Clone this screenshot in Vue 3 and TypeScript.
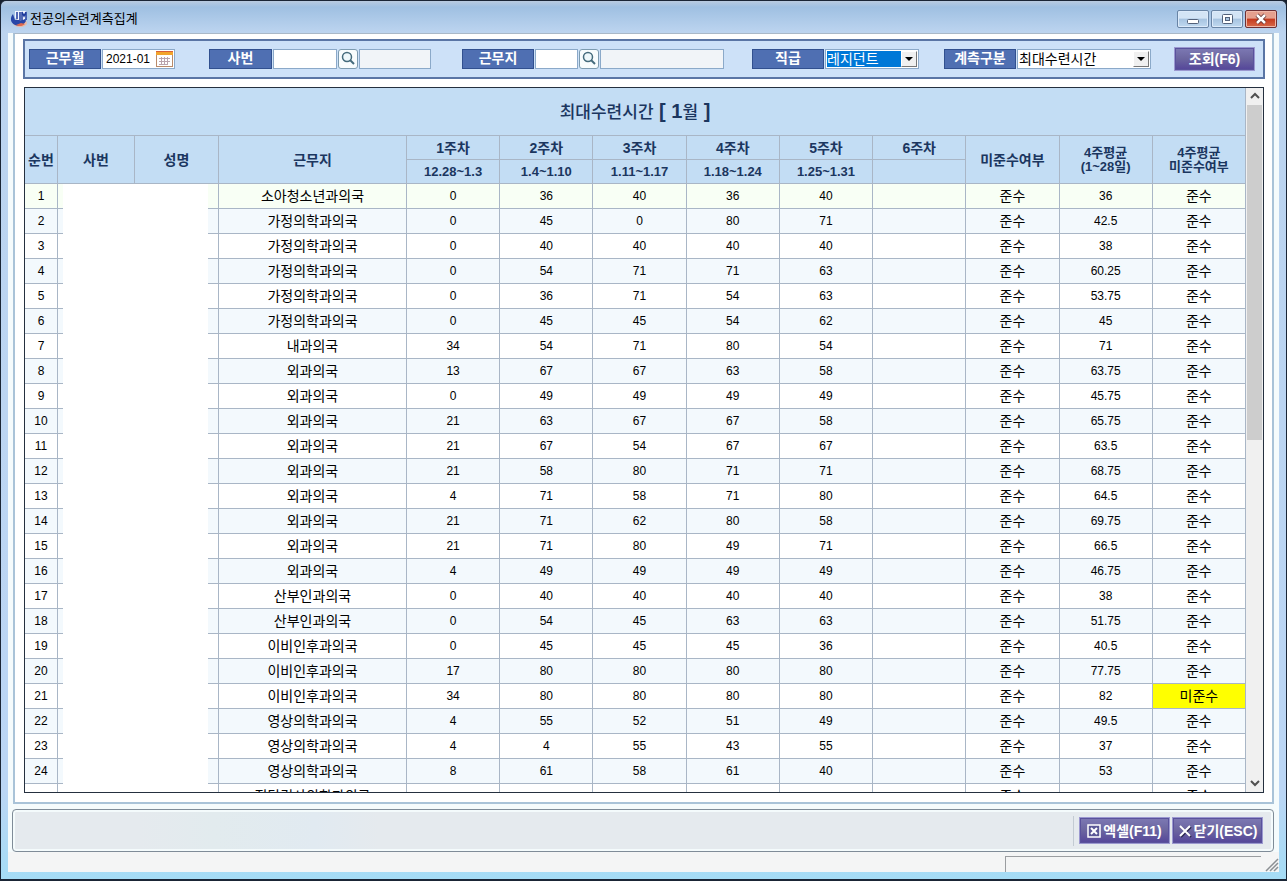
<script setup lang="ts">
import { computed, ref } from 'vue'

type Row = [string, number[], number, string?]

const month = ref('2021-01')
const employeeId = ref('')
const employeeName = ref('')
const deptCode = ref('')
const deptName = ref('')
const position = ref('레지던트')
const measure = ref('최대수련시간')

const weeks = [
  { label: '1주차', range: '12.28~1.3' },
  { label: '2주차', range: '1.4~1.10' },
  { label: '3주차', range: '1.11~1.17' },
  { label: '4주차', range: '1.18~1.24' },
  { label: '5주차', range: '1.25~1.31' },
  { label: '6주차', range: '' },
]

const source: Row[] = [
  ['소아청소년과의국', [0, 36, 40, 36, 40], 36],
  ['가정의학과의국', [0, 45, 0, 80, 71], 42.5],
  ['가정의학과의국', [0, 40, 40, 40, 40], 38],
  ['가정의학과의국', [0, 54, 71, 71, 63], 60.25],
  ['가정의학과의국', [0, 36, 71, 54, 63], 53.75],
  ['가정의학과의국', [0, 45, 45, 54, 62], 45],
  ['내과의국', [34, 54, 71, 80, 54], 71],
  ['외과의국', [13, 67, 67, 63, 58], 63.75],
  ['외과의국', [0, 49, 49, 49, 49], 45.75],
  ['외과의국', [21, 63, 67, 67, 58], 65.75],
  ['외과의국', [21, 67, 54, 67, 67], 63.5],
  ['외과의국', [21, 58, 80, 71, 71], 68.75],
  ['외과의국', [4, 71, 58, 71, 80], 64.5],
  ['외과의국', [21, 71, 62, 80, 58], 69.75],
  ['외과의국', [21, 71, 80, 49, 71], 66.5],
  ['외과의국', [4, 49, 49, 49, 49], 46.75],
  ['산부인과의국', [0, 40, 40, 40, 40], 38],
  ['산부인과의국', [0, 54, 45, 63, 63], 51.75],
  ['이비인후과의국', [0, 45, 45, 45, 36], 40.5],
  ['이비인후과의국', [17, 80, 80, 80, 80], 77.75],
  ['이비인후과의국', [34, 80, 80, 80, 80], 82, '미준수'],
  ['영상의학과의국', [4, 55, 52, 51, 49], 49.5],
  ['영상의학과의국', [4, 4, 55, 43, 55], 37],
  ['영상의학과의국', [8, 61, 58, 61, 40], 53],
  ['진단검사의학과의국', [], NaN],
]

const rows = computed(() =>
  source.map(([dept, hours, average, averageStatus], i) => ({
    no: hours.length ? String(i + 1) : '',
    dept,
    hours: weeks.map((_, w) => hours[w] ?? ''),
    average: Number.isNaN(average) ? '' : average,
    status: '준수',
    averageStatus: averageStatus ?? '준수',
  })),
)
</script>

<template>
  <div class="window">
    <header class="titlebar">
      <svg class="logo" viewBox="0 0 18 18" aria-hidden="true">
        <ellipse cx="10" cy="13" rx="7" ry="4" fill="#e9b9a4" />
        <path d="M3 4C0 7 0 13 5 15c4 2 9 0 11-4l-1-2-10 1z" fill="#2846a8" />
        <path d="M6 15c3 2 7 1 9-1l-4-1z" fill="#dd6a50" />
        <path d="M5 1h11v7c-3 3-8 3-11 0z" fill="#f4f7ff" />
        <path d="M7 2v7M10 2v8M12 10V2l2 4 2-4v8" fill="none" stroke="#1e3b9d" stroke-width="1.500" />
      </svg>
      <h1>전공의수련계측집계</h1>
      <div class="controls">
        <button type="button" aria-label="최소화">
          <svg viewBox="0 0 30 16"><rect x="9.500" y="8.500" width="11" height="4" rx="1" fill="#fff" stroke="#52617a" /></svg>
        </button>
        <button type="button" aria-label="최대화">
          <svg viewBox="0 0 30 16"><rect x="10.500" y="3.500" width="10" height="9" rx="1" fill="#fff" stroke="#52617a" /><rect x="13.500" y="6.500" width="4" height="3" fill="#a9c3de" stroke="#52617a" /></svg>
        </button>
        <button type="button" class="shut" aria-label="닫기">
          <svg viewBox="0 0 30 16"><path d="M11 4l8 8M19 4l-8 8" stroke="#5a2a2a" stroke-width="4" /><path d="M11 4l8 8M19 4l-8 8" stroke="#fff" stroke-width="2.500" /></svg>
        </button>
      </div>
    </header>

    <div class="client">
      <main class="panel">
        <form class="filters" @submit.prevent>
          <div class="group">
            <label for="month">근무월</label>
            <div class="date">
              <input id="month" v-model="month" type="text" />
              <button type="button" aria-label="달력">
                <svg viewBox="0 0 18 18">
                  <rect x="0.500" y="1.500" width="16" height="15" fill="#fff" stroke="#b98a6a" />
                  <rect x="0" y="1" width="17" height="4" fill="#f2a52c" />
                  <path d="M0 1.500h17" stroke="#d9603a" />
                  <path d="M3 8.500h11M3 11.500h11M3 14.500h8M5.500 7v8M8.500 7v8M11.500 7v8" stroke="#b9a3ad" />
                </svg>
              </button>
            </div>
          </div>
          <div class="group">
            <label for="emp" class="short">사번</label>
            <input id="emp" v-model="employeeId" class="w64" type="text" />
            <button type="button" class="search" aria-label="사번 검색">
              <svg viewBox="0 0 18 18"><circle cx="8" cy="7" r="4.500" fill="#eef8fb" stroke="#456b7c" stroke-width="1.500" /><path d="M11 10l4 4" stroke="#456b7c" stroke-width="2" /></svg>
            </button>
            <input v-model="employeeName" class="w72 locked" type="text" readonly aria-label="성명" />
          </div>
          <div class="group">
            <label for="dept">근무지</label>
            <input id="dept" v-model="deptCode" class="w43" type="text" />
            <button type="button" class="search" aria-label="근무지 검색">
              <svg viewBox="0 0 18 18"><circle cx="8" cy="7" r="4.500" fill="#eef8fb" stroke="#456b7c" stroke-width="1.500" /><path d="M11 10l4 4" stroke="#456b7c" stroke-width="2" /></svg>
            </button>
            <input v-model="deptName" class="w124 locked" type="text" readonly aria-label="근무지명" />
          </div>
          <div class="group">
            <label for="position">직급</label>
            <div class="combo active">
              <select id="position" v-model="position"><option>레지던트</option></select>
              <span class="arrow"></span>
            </div>
          </div>
          <div class="group">
            <label for="measure">계측구분</label>
            <div class="combo wide">
              <select id="measure" v-model="measure"><option>최대수련시간</option></select>
              <span class="arrow"></span>
            </div>
          </div>
          <button type="submit" class="action query">조회(F6)</button>
        </form>

        <section class="grid">
          <div class="viewport">
            <table>
              <colgroup>
                <col class="c-no" /><col class="c-id" /><col class="c-name" /><col class="c-dept" />
                <col v-for="n in 9" :key="n" />
              </colgroup>
              <thead>
                <tr class="caption"><th colspan="13"><span>최대수련시간</span> [ 1<span>월</span> ]</th></tr>
                <tr class="sub">
                  <th rowspan="2">순번</th>
                  <th rowspan="2">사번</th>
                  <th rowspan="2">성명</th>
                  <th rowspan="2">근무지</th>
                  <th v-for="w in weeks" :key="w.label">{{ w.label }}</th>
                  <th rowspan="2">미준수여부</th>
                  <th rowspan="2" class="two">4주평균<br />(1~28일)</th>
                  <th rowspan="2" class="two">4주평균<br />미준수여부</th>
                </tr>
                <tr class="sub">
                  <th v-for="w in weeks" :key="w.label" class="range">{{ w.range }}</th>
                </tr>
              </thead>
              <tbody>
                <tr v-for="(r, i) in rows" :key="i">
                  <td>{{ r.no }}</td>
                  <td></td>
                  <td></td>
                  <td class="ko">{{ r.dept }}</td>
                  <td v-for="(h, w) in r.hours" :key="w">{{ h }}</td>
                  <td class="ko">{{ r.status }}</td>
                  <td>{{ r.average }}</td>
                  <td class="ko" :class="{ alert: r.averageStatus === '미준수' }">{{ r.averageStatus }}</td>
                </tr>
              </tbody>
            </table>
            <div class="mask"></div>
          </div>
          <div class="scrollbar" aria-hidden="true">
            <svg viewBox="0 0 17 17"><path d="M5 10l4-4 4 4" /></svg>
            <div class="track"><div class="thumb"></div></div>
            <svg viewBox="0 0 17 17"><path d="M5 6l4 4 4-4" /></svg>
          </div>
        </section>
      </main>

      <footer class="toolbar">
        <button type="button" class="action">
          <svg viewBox="0 0 14 14"><rect x="1" y="1" width="12" height="12" fill="#5a5796" stroke="#fff" stroke-width="1.500" /><path d="M4 4l6 6M10 4l-6 6" stroke="#fff" stroke-width="2" /></svg>
          <span>엑셀(F11)</span>
        </button>
        <button type="button" class="action">
          <svg viewBox="0 0 14 14"><path d="M3 3l10 10M13 3l-10 10" stroke="#2b2850" stroke-width="2" /><path d="M2 2l10 10M12 2L2 12" stroke="#fff" stroke-width="2" /></svg>
          <span>닫기(ESC)</span>
        </button>
      </footer>

      <div class="status">
        <div class="message"></div>
        <svg viewBox="0 0 14 14" aria-hidden="true"><path d="M1 13L13 1M5 13l8-8M9 13l4-4" stroke="#8b9094" stroke-width="1.500" /></svg>
      </div>
    </div>
  </div>
</template>

<style>
body {
  margin: 0;
  background: #16202e;
}
</style>

<style scoped>
* {
  box-sizing: border-box;
}
.window {
  display: flex;
  flex-direction: column;
  height: 100vh;
  padding: 0 7px 7px;
  border: 1px solid #1a2535;
  border-bottom-width: 2px;
  border-radius: 6px 6px 0 0;
  background: linear-gradient(#b9cbe0 0, #9fc0e2 6px, #bcd4ef 31px, #bbd6f5 90%, #a5dcf5 100%);
  font-family: 'Liberation Sans', 'Noto Sans CJK KR', sans-serif;
  font-size: 12px;
  color: #000;
}
button,
input,
select {
  margin: 0;
  padding: 0;
  border: 0;
  border-radius: 0;
  font: inherit;
  color: inherit;
}
svg {
  display: block;
  fill: none;
}
.titlebar {
  display: flex;
  flex: none;
  align-items: center;
  height: 32px;
  padding: 3px 2px 0;
}
.logo {
  width: 18px;
  height: 18px;
}
h1 {
  flex: 1;
  margin: 0 0 0 2px;
  font-size: 13px;
  line-height: 18px;
  font-weight: 400;
}
.controls {
  display: flex;
  gap: 2px;
}
.controls button {
  width: 32px;
  height: 18px;
  border: 1px solid #6884a5;
  border-radius: 2px;
  background: linear-gradient(#d3e4f5 0 45%, #a6c3e0 50%, #c0d9f0);
  box-shadow: inset 0 0 0 1px #dceafa;
}
.controls .shut {
  border-color: #6d2f34;
  background: linear-gradient(#e5a08e 0 45%, #c43a1e 50%, #d8694a);
  box-shadow: inset 0 0 0 1px #eeb7a8;
}
.client {
  display: flex;
  flex: 1;
  flex-direction: column;
  min-height: 0;
  padding: 0 5px;
  background: #f5fbfc;
}
.panel {
  display: flex;
  flex: 1;
  flex-direction: column;
  gap: 8px;
  min-height: 0;
  padding: 5px 7px 9px 8px;
  border: 2px solid #a9c3d8;
  border-top: 1px solid #a9b8c8;
  background: #fff;
}
.filters {
  display: grid;
  grid-template-columns: 180fr 253fr 290fr 192fr 230fr 81px;
  flex: none;
  align-items: center;
  height: 40px;
  padding: 0 8px 0 4px;
  border: 2px solid #5a75a5;
  background: #cde1f8;
}
.group {
  display: flex;
  gap: 1px;
}
label {
  width: 72px;
  height: 20px;
  border: 1px solid #31508f;
  background: #4f6fb2;
  color: #fff;
  font-size: 14px;
  font-weight: 700;
  line-height: 16px;
  text-align: center;
}
label.short {
  width: 63px;
}
.group input {
  height: 20px;
  padding: 0 3px;
  border: 1px solid #8ba9c9;
  background: #fff;
}
.group .locked {
  background: #f1f4f8;
}
.w43 {
  width: 43px;
}
.w64 {
  width: 64px;
}
.w72 {
  width: 72px;
}
.w124 {
  width: 124px;
}
.date {
  display: flex;
  align-items: center;
  width: 73px;
  height: 20px;
  border: 1px solid #8ba9c9;
  background: #fff;
}
.group .date input {
  flex: 1;
  min-width: 0;
  height: 18px;
  border: 0;
}
.date button {
  width: 18px;
  height: 18px;
  background: none;
}
.search {
  width: 20px;
  height: 20px;
  border: 1px solid #7d9bb0;
  border-radius: 3px;
  background: #f8fcfd;
}
.combo {
  display: flex;
  width: 94px;
  height: 20px;
  padding: 1px;
  border: 1px solid #8ba9c9;
  background: #fff;
}
.combo.wide {
  width: 134px;
}
.combo select {
  flex: 1;
  min-width: 0;
  height: 16px;
  appearance: none;
  background: #fff;
  font-size: 14px;
  line-height: 16px;
}
.combo.active select {
  background: #0078d7;
  color: #fff;
}
.arrow {
  display: flex;
  align-items: center;
  justify-content: center;
  width: 16px;
  border: 1px solid #fff;
  border-right-color: #777;
  border-bottom-color: #777;
  background: #f0f0f0;
}
.arrow::after {
  content: '';
  border: 4px solid transparent;
  border-top-color: #000;
  border-bottom: 0;
}
.action {
  display: flex;
  align-items: center;
  justify-content: center;
  gap: 2px;
  height: 27px;
  border: 1px solid #9b98d0;
  background: linear-gradient(#7d79b4, #6b659f 50%, #54459a);
  box-shadow: inset 0 0 0 1px #5a529c;
  color: #fff;
  font-size: 14px;
  font-weight: 700;
  line-height: 18px;
  white-space: nowrap;
}
.query {
  height: 24px;
}
.grid {
  display: flex;
  flex: 1;
  min-height: 0;
  margin: 0 1px;
  border: 1px solid #25303f;
}
.viewport {
  position: relative;
  flex: 1;
  min-width: 0;
  overflow: hidden;
}
table {
  width: 100%;
  border-collapse: separate;
  border-spacing: 0;
  table-layout: fixed;
}
.c-no {
  width: 33px;
}
.c-id {
  width: 77px;
}
.c-name {
  width: 84px;
}
.c-dept {
  width: 188px;
}
th,
td {
  padding: 0;
  border-right: 1px solid #a9b6c6;
  border-bottom: 1px solid #a9b6c6;
  text-align: center;
  white-space: nowrap;
}
th {
  background: #c3ddf4;
  color: #1b365f;
  font-size: 14px;
  line-height: 14px;
  font-weight: 700;
}
.caption th {
  height: 48px;
  font-size: 20px;
  line-height: 24px;
}
.caption span {
  font-size: 17px;
  font-weight: 500;
}
.sub th {
  height: 24px;
}
.sub .two {
  font-size: 13px;
}
.sub .range {
  font-size: 13px;
}
td {
  height: 25px;
  line-height: 20px;
}
td.ko {
  font-size: 14px;
}
tbody tr {
  background: #fff;
}
tbody tr:nth-child(even) {
  background: #f3f9fd;
}
tbody tr:first-child {
  background: #f8fff5;
}
.alert {
  background: #ff0;
}
.mask {
  position: absolute;
  top: 96px;
  bottom: 0;
  left: 38px;
  width: 145px;
  background: #fff;
}
.scrollbar {
  display: flex;
  flex: none;
  flex-direction: column;
  width: 17px;
  background: #f0f0f0;
}
.scrollbar svg {
  width: 17px;
  height: 17px;
}
.scrollbar path {
  stroke: #505050;
  stroke-width: 2;
}
.track {
  flex: 1;
}
.thumb {
  width: 15px;
  height: 50%;
  margin: 0 auto;
  background: #cdcdcd;
}
.toolbar {
  display: flex;
  flex: none;
  align-items: center;
  justify-content: flex-end;
  gap: 2px;
  height: 43px;
  margin: 5px 0 0 -1px;
  padding: 0 10px;
  border: 1px solid #7f8c98;
  border-radius: 4px;
  background: linear-gradient(90deg, #e5eaee 10%, #e2ebee 16%, #e1eaf1 24%, #e5eaee 29%);
  box-shadow: inset 0 0 0 2px #f4fbfc;
}
.toolbar .action {
  width: 91px;
}
.toolbar .action svg {
  width: 14px;
  height: 14px;
}
.toolbar::before {
  content: '';
  height: 30px;
  margin-right: 3px;
  border-left: 1px solid #c3cbd3;
}
.status {
  display: flex;
  flex: none;
  align-items: flex-end;
  justify-content: flex-end;
  gap: 4px;
  height: 20px;
  margin: 0 -5px;
  background: #f4f5f5;
}
.message {
  width: 256px;
  height: 16px;
  border-top: 1px solid #9a9da0;
  border-left: 1px solid #9a9da0;
}
.status svg {
  width: 14px;
  height: 14px;
}
</style>
